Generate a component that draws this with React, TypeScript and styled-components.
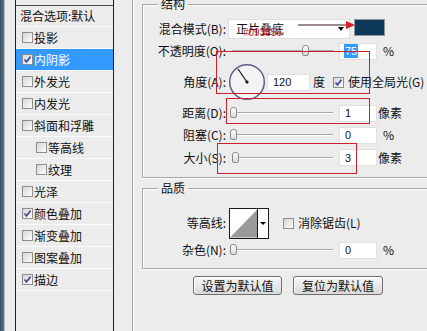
import React from 'react';
import styled, { createGlobalStyle } from 'styled-components';

const GlobalStyle = createGlobalStyle`
  html, body { margin: 0; padding: 0; background: #ececec; }
  body { font-family: "Noto Sans CJK SC", "Noto Sans", sans-serif; font-size: 12px; color: #111; }
  * { box-sizing: border-box; }
`;

const Window = styled.div`
  position: relative;
  width: 427px;
  height: 331px;
  overflow: hidden;
  display: flex;
  align-items: stretch;
  background: #ececec;
`;

const EdgeStrip = styled.div`
  width: 5px;
  flex: none;
  background: linear-gradient(90deg, #3e5566, #5a7282);
  border-right: 1px solid #b9c1c7;
`;

const ListPanel = styled.div`
  margin-left: 10px;
  width: 99px;
  flex: none;
  border-left: 1px solid #1e1e1e;
  border-right: 1px solid #1e1e1e;
  display: flex;
  flex-direction: column;
`;

const ListStub = styled.div`
  height: 6px;
  border-bottom: 1px solid #4a4a4a;
`;

const ListItem = styled.div<{ $h?: number; $indent: number; $active?: boolean }>`
  height: ${(p) => p.$h ?? 22}px;
  display: flex;
  align-items: center;
  padding-left: ${(p) => p.$indent}px;
  border-bottom: 1px solid #fbfbfb;
  background: ${(p) => (p.$active ? '#3399ff' : 'transparent')};
  color: ${(p) => (p.$active ? '#fff' : '#111')};
  font-size: 12px;
  line-height: 1;
  white-space: nowrap;
`;

const ItemText = styled.span`
  margin-left: 1px;
`;

const Box = styled.span<{ $ml?: number }>`
  width: 11px;
  height: 11px;
  flex: none;
  margin-left: ${(p) => p.$ml ?? 0}px;
  border: 1px solid #8d8e8f;
  background: linear-gradient(135deg, #d6d6d6, #fdfdfd);
  display: flex;
  align-items: center;
  justify-content: center;
`;

const Checkbox: React.FC<{ checked?: boolean; ml?: number }> = ({ checked, ml }) => (
  <Box $ml={ml}>
    {checked && (
      <svg width="9" height="9" viewBox="0 0 9 9">
        <path d="M1.5 4.5 L3.5 6.8 L7.6 1.6" fill="none" stroke="#4b4f96" strokeWidth="1.7" />
      </svg>
    )}
  </Box>
);

const RightPane = styled.div`
  margin-left: 18px;
  flex: 1;
  min-width: 0;
  border-left: 1px solid #a3a3a3;
  box-shadow: inset 1px 0 0 #ffffff;
  padding: 4px 0 0 9px;
  display: flex;
  flex-direction: column;
`;

const Group = styled.div<{ $mt?: number; $pt: number; $pb: number }>`
  position: relative;
  margin-top: ${(p) => p.$mt ?? 0}px;
  margin-right: -40px;
  border: 1px solid #a6a6a6;
  border-right: none;
  box-shadow: inset 1px 1px 0 #ffffff, 0 1px 0 #ffffff;
  padding: ${(p) => p.$pt}px 0 ${(p) => p.$pb}px 0;
`;

const Legend = styled.span`
  position: absolute;
  top: -8px;
  left: 15px;
  padding: 0 3px;
  background: #ececec;
  font-size: 12px;
  line-height: 14px;
`;

const Row = styled.div<{ $h: number }>`
  height: ${(p) => p.$h}px;
  display: flex;
  align-items: center;
`;

const Label = styled.span`
  width: 83px;
  flex: none;
  text-align: right;
  white-space: nowrap;
  font-size: 12px;
  line-height: 1;
`;

const Select = styled.div`
  margin-left: 2px;
  width: 122px;
  height: 20px;
  flex: none;
  background: #fff;
  border: 1px solid #dedede;
  display: flex;
  align-items: center;
  padding-left: 7px;
  font-size: 12px;
`;

const SelectArrow = styled.span`
  margin-left: auto;
  margin-right: 5px;
  width: 0;
  height: 0;
  border-left: 3px solid transparent;
  border-right: 3px solid transparent;
  border-top: 4px solid #000;
`;

const Swatch = styled.span`
  margin-left: 4px;
  margin-bottom: 3px;
  width: 31px;
  height: 17px;
  flex: none;
  background: #0b3956;
  border: 1px solid #8a96a0;
`;

const SliderWrap = styled.div`
  margin-left: 3px;
  width: 104px;
  height: 14px;
  flex: none;
  position: relative;
`;

const Track = styled.div`
  position: absolute;
  left: 3px;
  right: 0;
  top: 6px;
  height: 2px;
  border-top: 1px solid #a9a9a9;
  border-bottom: 1px solid #ffffff;
`;

const Thumb = styled.div<{ $pos: number }>`
  position: absolute;
  top: 1px;
  left: ${(p) => p.$pos}px;
  width: 7px;
  height: 11px;
  border: 1px solid #8c8c8c;
  border-radius: 3px 3px 2px 2px;
  background: linear-gradient(#ffffff, #d9d9d9);
`;

const Slider: React.FC<{ pos: number }> = ({ pos }) => (
  <SliderWrap>
    <Track />
    <Thumb $pos={pos} />
  </SliderWrap>
);

const Input = styled.div<{ $ml: number; $w: number }>`
  margin-left: ${(p) => p.$ml}px;
  width: ${(p) => p.$w}px;
  height: 17px;
  flex: none;
  background: #fff;
  border: 1px solid #e0e0e0;
  display: flex;
  align-items: center;
  padding-left: 5px;
  font-family: "Liberation Sans", Arial, sans-serif;
  font-size: 11px;
  color: #111;
`;

const Selected = styled.span`
  background: #3399ff;
  color: #fff;
  padding: 1px 1px;
  margin-left: -1px;
`;

const Unit = styled.span<{ $ml: number }>`
  margin-left: ${(p) => p.$ml}px;
  font-size: 12px;
  line-height: 1;
  white-space: nowrap;
`;

const DialSvg = styled.svg`
  margin-left: 2px;
  flex: none;
`;

const Dial: React.FC = () => (
  <DialSvg width="38" height="38" viewBox="0 0 38 38">
    <circle cx="19" cy="19" r="17.3" fill="#f3f3f3" stroke="#5d6283" strokeWidth="1.5" />
    <line x1="19" y1="19" x2="10" y2="6" stroke="#111" strokeWidth="1.2" />
    <circle cx="19" cy="19" r="1.6" fill="#111" />
  </DialSvg>
);

const ContourBox = styled.div`
  margin-left: 3px;
  width: 40px;
  height: 31px;
  flex: none;
  border: 1px solid #1a1a1a;
  display: flex;
  background: #fff;
`;

const ContourArrow = styled.div`
  width: 11px;
  border-left: 1px solid #1a1a1a;
  display: flex;
  align-items: center;
  justify-content: center;
  &::after {
    content: '';
    border-left: 3px solid transparent;
    border-right: 3px solid transparent;
    border-top: 3px solid #000;
  }
`;

const ButtonRow = styled.div`
  margin-top: 7px;
  padding-left: 51px;
  display: flex;
  gap: 11px;
`;

const Button = styled.div<{ $w: number }>`
  width: ${(p) => p.$w}px;
  height: 19px;
  border: 1px solid #6f6f6f;
  border-radius: 3px;
  background: linear-gradient(#f7f7f7, #d9d9d9);
  box-shadow: inset 1px 1px 0 #ffffff;
  display: flex;
  align-items: center;
  justify-content: center;
  font-size: 12px;
  line-height: 1;
`;

const RedBox = styled.div<{ $x: number; $y: number; $w: number; $h: number }>`
  position: absolute;
  left: ${(p) => p.$x}px;
  top: ${(p) => p.$y}px;
  width: ${(p) => p.$w}px;
  height: ${(p) => p.$h}px;
  border: 1px solid #cc1f2e;
  pointer-events: none;
`;

const ArrowSvg = styled.svg`
  position: absolute;
  left: 296px;
  top: 19px;
`;

const Note = styled.span`
  position: absolute;
  left: 243px;
  top: 27px;
  font-family: "Liberation Sans", Arial, sans-serif;
  font-size: 10px;
  line-height: 11px;
  color: #d0202e;
`;

const listItems: { text: string; checked?: boolean; sub?: boolean; active?: boolean }[] = [
  { text: '投影' },
  { text: '内阴影', checked: true, active: true },
  { text: '外发光' },
  { text: '内发光' },
  { text: '斜面和浮雕' },
  { text: '等高线', sub: true },
  { text: '纹理', sub: true },
  { text: '光泽' },
  { text: '颜色叠加', checked: true },
  { text: '渐变叠加' },
  { text: '图案叠加' },
  { text: '描边', checked: true },
];

export default function App() {
  return (
    <>
      <GlobalStyle />
      <Window>
        <EdgeStrip />
        <ListPanel>
          <ListStub />
          <ListItem $h={21} $indent={4}>混合选项:默认</ListItem>
          {listItems.map((it) => (
            <ListItem key={it.text} $indent={it.sub ? 20 : 6} $active={it.active}>
              <Checkbox checked={it.checked} />
              <ItemText>{it.text}</ItemText>
            </ListItem>
          ))}
        </ListPanel>
        <RightPane>
          <Group $pt={12} $pb={8}>
            <Legend>结构</Legend>
            <Row $h={23}>
              <Label>混合模式(B):</Label>
              <Select>
                正片叠底
                <SelectArrow />
              </Select>
              <Swatch />
            </Row>
            <Row $h={22}>
              <Label>不透明度(O):</Label>
              <Slider pos={73} />
              <Input $ml={6} $w={38}>
                <Selected>75</Selected>
              </Input>
              <Unit $ml={6}>%</Unit>
            </Row>
            <Row $h={40}>
              <Label>角度(A):</Label>
              <Dial />
              <Input $ml={1} $w={43}>120</Input>
              <Unit $ml={3}>度</Unit>
              <Checkbox checked ml={8} />
              <Unit $ml={4}>使用全局光(G)</Unit>
            </Row>
            <Row $h={22}>
              <Label>距离(D):</Label>
              <Slider pos={1} />
              <Input $ml={6} $w={38}>1</Input>
              <Unit $ml={1}>像素</Unit>
            </Row>
            <Row $h={22}>
              <Label>阻塞(C):</Label>
              <Slider pos={1} />
              <Input $ml={6} $w={38}>0</Input>
              <Unit $ml={6}>%</Unit>
            </Row>
            <Row $h={23}>
              <Label>大小(S):</Label>
              <Slider pos={3} />
              <Input $ml={6} $w={38}>3</Input>
              <Unit $ml={1}>像素</Unit>
            </Row>
          </Group>
          <Group $mt={10} $pt={18} $pb={7}>
            <Legend>品质</Legend>
            <Row $h={32}>
              <Label>等高线:</Label>
              <ContourBox>
                <svg width="28" height="29" viewBox="0 0 28 29">
                  <rect width="28" height="29" fill="#ffffff" />
                  <polygon points="0,29 28,0 28,29" fill="#9a9a9a" />
                </svg>
                <ContourArrow />
              </ContourBox>
              <Checkbox ml={14} />
              <Unit $ml={4}>消除锯齿(L)</Unit>
            </Row>
            <Row $h={22}>
              <Label>杂色(N):</Label>
              <Slider pos={1} />
              <Input $ml={6} $w={38}>0</Input>
              <Unit $ml={6}>%</Unit>
            </Row>
          </Group>
          <ButtonRow>
            <Button $w={89}>设置为默认值</Button>
            <Button $w={90}>复位为默认值</Button>
          </ButtonRow>
        </RightPane>
        <RedBox $x={216} $y={51} $w={154} $h={43} />
        <RedBox $x={226} $y={98} $w={144} $h={26} />
        <RedBox $x={217} $y={143} $w={140} $h={31} />
        <ArrowSvg width="62" height="14" viewBox="0 0 62 14">
          <line x1="2" y1="6" x2="52" y2="6" stroke="#3a1a1a" strokeWidth="1" />
          <polygon points="50,2 59,6 50,10" fill="#d3202e" />
        </ArrowSvg>
        <Note>#093856</Note>
      </Window>
    </>
  );
}
